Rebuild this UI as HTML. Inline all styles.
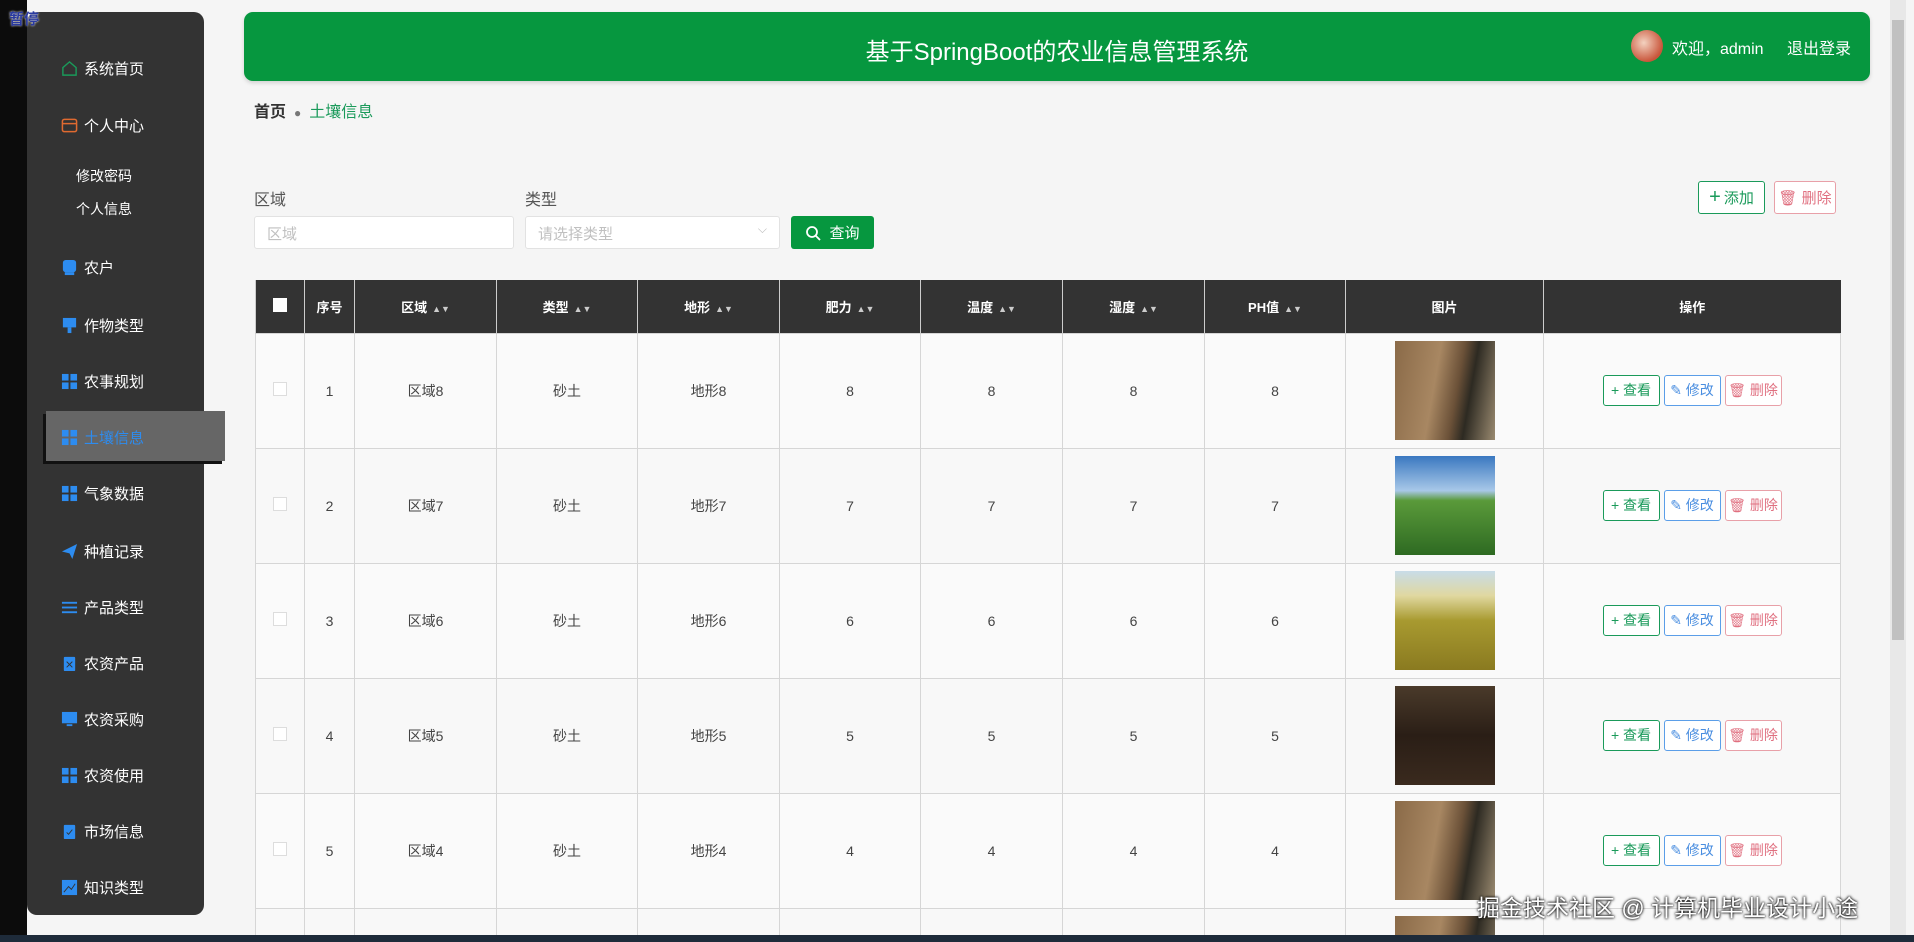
<!DOCTYPE html>
<html><head><meta charset="utf-8">
<style>
*{margin:0;padding:0;box-sizing:border-box}
html,body{width:1914px;height:942px;overflow:hidden}
body{background:#f5f5f5;font-family:"Liberation Sans","Noto Sans CJK SC",sans-serif;color:#333}
#w{position:relative;width:1914px;height:942px;overflow:hidden}
.lstrip{position:absolute;left:0;top:0;width:27px;height:942px;background:#0c0c0c}
.pause{position:absolute;left:9px;top:8px;font-size:15px;font-weight:bold;color:#2a3aa0;text-shadow:0 0 2px #fff}
.side{position:absolute;left:27px;top:12px;width:177px;height:903px;background:#333;border-radius:10px}
.item{position:absolute;height:24px;display:flex;align-items:center;color:#fff;font-size:15px}
.item .ic{width:17px;height:17px;margin-right:6px;display:inline-block}
.sub{position:absolute;left:76px;color:#fff;font-size:14px}
.active{position:absolute;left:46px;top:411px;width:179px;height:50px;background:#666;box-shadow:-3px 3px 0 #111}
.header{position:absolute;left:244px;top:12px;width:1626px;height:69px;background:#06973f;border-radius:9px;box-shadow:0 2px 4px rgba(0,0,0,.15)}
.title{position:absolute;left:0;right:0;top:20px;text-align:center;color:#fff;font-size:24px}
.avatar{position:absolute;left:1387px;top:18px;width:32px;height:32px;border-radius:50%;background:radial-gradient(circle at 40% 40%,#f3d2c0,#c9553a 70%)}
.welcome{position:absolute;left:1428px;top:23px;color:#fff;font-size:16px}
.logout{position:absolute;left:1543px;top:23px;color:#fff;font-size:16px}
.bc{position:absolute;left:254px;top:98px;font-size:16px}
.lbl{position:absolute;top:186px;font-size:16px;color:#555}
.inp{position:absolute;top:216px;height:33px;background:#fff;border:1px solid #e2e2e2;border-radius:3px;color:#c0c0c0;font-size:15px;padding:6px 12px}
.btn{position:absolute;border-radius:3px;font-size:15px;display:flex;align-items:center;justify-content:center;background:#fff}
.tw{position:absolute;left:255px;top:280px;width:1586px;height:655px;overflow:hidden}
table{border-collapse:collapse;table-layout:fixed}
th{background:#333;color:#fff;font-size:13px;height:53px;border-left:1px solid #ccc;font-weight:bold}
td{height:115px;border:1px solid #d6d6d6;text-align:center;font-size:14px;color:#444}
tr:nth-child(odd) td{background:#f8f8f8}
tr:nth-child(even) td{background:#fafafa}
.sort{font-size:9px;margin-left:5px;color:#ccc}
.cb{display:inline-block;width:14px;height:14px;border:1px solid #ddd;background:#fff}
.pic{width:100px;height:99px;margin:auto}
.ab{display:inline-block;width:57px;height:31px;line-height:29px;border-radius:3px;font-size:14px;margin:0 2px;background:#fff}
.bottom{position:absolute;left:0;top:935px;width:1914px;height:7px;background:#1e2b3a}
.sb{position:absolute;left:1890px;top:0;width:16px;height:935px;background:#e8e8e8}
.sbt{position:absolute;left:1892px;top:20px;width:12px;height:620px;background:#c1c1c1}
.wm{position:absolute;left:1477px;top:889px;color:#fff;font-size:23px;text-shadow:0 0 3px #000,0 0 2px #000}
</style></head><body><div id="w">
<div class="lstrip"></div>
<div class="side"></div>
<div class="pause">暂停</div>
<div class="active"></div>
<div class="item" style="left:61px;top:56px"><svg class="ic" viewBox="0 0 18 18"><path d="M2 8 L9 2 L16 8 V16 H2 Z" fill="none" stroke="#1a9a5a" stroke-width="1.5"/></svg>系统首页</div>
<div class="item" style="left:61px;top:113px"><svg class="ic" viewBox="0 0 18 18"><rect x="1.5" y="2.5" width="15" height="13" rx="2" fill="none" stroke="#e06a30" stroke-width="1.6"/><line x1="1.5" y1="7" x2="16.5" y2="7" stroke="#e06a30" stroke-width="1.6"/></svg>个人中心</div>
<div class="sub" style="top:166px">修改密码</div>
<div class="sub" style="top:199px">个人信息</div>
<div class="item" style="left:61px;top:255px"><svg class="ic" viewBox="0 0 18 18"><rect x="2" y="1" width="14" height="13" rx="3" fill="#2d8cf0"/><rect x="4" y="14" width="10" height="3" fill="#2d8cf0"/></svg>农户</div>
<div class="item" style="left:61px;top:313px"><svg class="ic" viewBox="0 0 18 18"><rect x="2" y="1" width="14" height="10" fill="#2d8cf0"/><rect x="7" y="11" width="4" height="6" fill="#2d8cf0"/></svg>作物类型</div>
<div class="item" style="left:61px;top:369px"><svg class="ic" viewBox="0 0 18 18" fill="#2d8cf0"><rect x="1" y="1" width="7" height="7"/><rect x="10" y="1" width="7" height="7"/><rect x="1" y="10" width="7" height="7"/><rect x="10" y="10" width="7" height="7"/></svg>农事规划</div>
<div class="item" style="left:61px;top:425px;color:#2d8cf0"><svg class="ic" viewBox="0 0 18 18" fill="#2d8cf0"><rect x="1" y="1" width="7" height="7"/><rect x="10" y="1" width="7" height="7"/><rect x="1" y="10" width="7" height="7"/><rect x="10" y="10" width="7" height="7"/></svg>土壤信息</div>
<div class="item" style="left:61px;top:481px"><svg class="ic" viewBox="0 0 18 18" fill="#2d8cf0"><rect x="1" y="1" width="7" height="7"/><rect x="10" y="1" width="7" height="7"/><rect x="1" y="10" width="7" height="7"/><rect x="10" y="10" width="7" height="7"/></svg>气象数据</div>
<div class="item" style="left:61px;top:539px"><svg class="ic" viewBox="0 0 18 18"><path d="M1 9 L17 1 L12 17 L9 11 Z" fill="#2d8cf0"/></svg>种植记录</div>
<div class="item" style="left:61px;top:595px"><svg class="ic" viewBox="0 0 18 18" stroke="#2d8cf0" stroke-width="2"><line x1="1" y1="4" x2="17" y2="4"/><line x1="1" y1="9" x2="17" y2="9"/><line x1="1" y1="14" x2="17" y2="14"/></svg>产品类型</div>
<div class="item" style="left:61px;top:651px"><svg class="ic" viewBox="0 0 18 18"><rect x="3" y="2" width="12" height="15" rx="1" fill="#2d8cf0"/><path d="M6 7 L12 13 M12 7 L6 13" stroke="#333" stroke-width="1"/></svg>农资产品</div>
<div class="item" style="left:61px;top:707px"><svg class="ic" viewBox="0 0 18 18" fill="#2d8cf0"><rect x="1" y="1" width="16" height="12"/><rect x="6" y="14" width="6" height="2"/></svg>农资采购</div>
<div class="item" style="left:61px;top:763px"><svg class="ic" viewBox="0 0 18 18" fill="#2d8cf0"><rect x="1" y="1" width="7" height="7"/><rect x="10" y="1" width="7" height="7"/><rect x="1" y="10" width="7" height="7"/><rect x="10" y="10" width="7" height="7"/></svg>农资使用</div>
<div class="item" style="left:61px;top:819px"><svg class="ic" viewBox="0 0 18 18"><rect x="3" y="2" width="12" height="15" rx="1" fill="#2d8cf0"/><path d="M6 10 L8 12 L12 7" stroke="#333" fill="none" stroke-width="1"/></svg>市场信息</div>
<div class="item" style="left:61px;top:875px"><svg class="ic" viewBox="0 0 18 18"><rect x="1" y="1" width="16" height="16" fill="#2d8cf0"/><path d="M3 14 L8 8 L11 11 L15 5" stroke="#333" fill="none" stroke-width="1"/></svg>知识类型</div>

<div class="header"><div class="title">基于SpringBoot的农业信息管理系统</div><div class="avatar"></div><div class="welcome">欢迎，admin</div><div class="logout">退出登录</div></div>

<div class="bc"><b style="color:#333">首页</b><span style="color:#777;margin:0 8px;font-size:12px">●</span><span style="color:#1a9a5a">土壤信息</span></div>

<div class="lbl" style="left:254px">区域</div>
<div class="lbl" style="left:525px">类型</div>
<div class="inp" style="left:254px;width:260px">区域</div>
<div class="inp" style="left:525px;width:255px">请选择类型<span style="position:absolute;right:12px;top:5px;color:#bbb;font-size:12px">⌵</span></div>
<div class="btn" style="left:791px;top:216px;width:83px;height:33px;background:#06973f;color:#fff"><svg width="16" height="16" viewBox="0 0 16 16" style="margin-right:8px"><circle cx="7" cy="7" r="5" fill="none" stroke="#fff" stroke-width="1.8"/><line x1="11" y1="11" x2="15" y2="15" stroke="#fff" stroke-width="1.8"/></svg>查询</div>
<div class="btn" style="left:1698px;top:181px;width:67px;height:33px;border:1px solid #1a9a5a;color:#1a9a5a"><span style="font-size:20px;margin-right:3px">+</span>添加</div>
<div class="btn" style="left:1774px;top:181px;width:62px;height:33px;border:1px solid #e8a0a8;color:#e07080">🗑 删除</div>

<div class="tw"><table>
<colgroup><col style="width:49px"><col style="width:50px"><col style="width:142px"><col style="width:141px"><col style="width:142px"><col style="width:141px"><col style="width:142px"><col style="width:142px"><col style="width:141px"><col style="width:198px"><col style="width:297px"></colgroup>
<tr><th><span class="cb" style="border:none"></span></th><th>序号</th><th>区域<span class="sort">▲▼</span></th><th>类型<span class="sort">▲▼</span></th><th>地形<span class="sort">▲▼</span></th><th>肥力<span class="sort">▲▼</span></th><th>温度<span class="sort">▲▼</span></th><th>湿度<span class="sort">▲▼</span></th><th>PH值<span class="sort">▲▼</span></th><th>图片</th><th>操作</th></tr>
<tr><td><span class="cb"></span></td><td>1</td><td>区域8</td><td>砂土</td><td>地形8</td><td>8</td><td>8</td><td>8</td><td>8</td><td><div class="pic" style="background:linear-gradient(100deg,#8a6a48,#a88762 40%,#6b5138 60%,#2d2a22 72%,#9a8a70)"></div></td><td><span class="ab" style="border:1px solid #1a9a5a;color:#1a9a5a">+ 查看</span><span class="ab" style="border:1px solid #5b9ee8;color:#4a8ee0">✎ 修改</span><span class="ab" style="border:1px solid #e8a0a8;color:#e07080">🗑 删除</span></td></tr>
<tr><td><span class="cb"></span></td><td>2</td><td>区域7</td><td>砂土</td><td>地形7</td><td>7</td><td>7</td><td>7</td><td>7</td><td><div class="pic" style="background:linear-gradient(180deg,#3a78c0,#a8c8e8 35%,#5a9a3a 45%,#2e6a22)"></div></td><td><span class="ab" style="border:1px solid #1a9a5a;color:#1a9a5a">+ 查看</span><span class="ab" style="border:1px solid #5b9ee8;color:#4a8ee0">✎ 修改</span><span class="ab" style="border:1px solid #e8a0a8;color:#e07080">🗑 删除</span></td></tr>
<tr><td><span class="cb"></span></td><td>3</td><td>区域6</td><td>砂土</td><td>地形6</td><td>6</td><td>6</td><td>6</td><td>6</td><td><div class="pic" style="background:linear-gradient(180deg,#c8dce8,#e0d8a0 25%,#a89a30 50%,#8a7a20)"></div></td><td><span class="ab" style="border:1px solid #1a9a5a;color:#1a9a5a">+ 查看</span><span class="ab" style="border:1px solid #5b9ee8;color:#4a8ee0">✎ 修改</span><span class="ab" style="border:1px solid #e8a0a8;color:#e07080">🗑 删除</span></td></tr>
<tr><td><span class="cb"></span></td><td>4</td><td>区域5</td><td>砂土</td><td>地形5</td><td>5</td><td>5</td><td>5</td><td>5</td><td><div class="pic" style="background:linear-gradient(180deg,#4a3a2a,#2a1e16 50%,#3a2a1e)"></div></td><td><span class="ab" style="border:1px solid #1a9a5a;color:#1a9a5a">+ 查看</span><span class="ab" style="border:1px solid #5b9ee8;color:#4a8ee0">✎ 修改</span><span class="ab" style="border:1px solid #e8a0a8;color:#e07080">🗑 删除</span></td></tr>
<tr><td><span class="cb"></span></td><td>5</td><td>区域4</td><td>砂土</td><td>地形4</td><td>4</td><td>4</td><td>4</td><td>4</td><td><div class="pic" style="background:linear-gradient(100deg,#8a6a48,#a88762 40%,#6b5138 60%,#2d2a22 72%,#9a8a70)"></div></td><td><span class="ab" style="border:1px solid #1a9a5a;color:#1a9a5a">+ 查看</span><span class="ab" style="border:1px solid #5b9ee8;color:#4a8ee0">✎ 修改</span><span class="ab" style="border:1px solid #e8a0a8;color:#e07080">🗑 删除</span></td></tr>
<tr><td></td><td></td><td></td><td></td><td></td><td></td><td></td><td></td><td></td><td><div class="pic" style="background:linear-gradient(100deg,#8a6a48,#a88762 40%,#6b5138 60%,#2d2a22 72%,#9a8a70)"></div></td><td></td></tr>
</table></div>

<div class="sb"></div><div class="sbt"></div>
<div class="wm">掘金技术社区 @ 计算机毕业设计小途</div>
<div class="bottom"></div>
</div></body></html>
